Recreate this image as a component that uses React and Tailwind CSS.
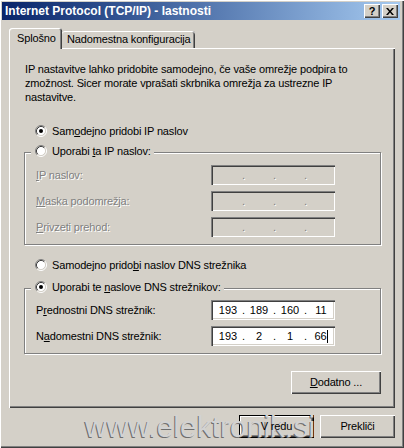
import React from "react";

const raised =
  "shadow-[inset_1px_1px_#ffffff,inset_-1px_-1px_#404040,inset_-2px_-2px_#808080]";
const sunken =
  "shadow-[inset_1px_1px_#808080,inset_2px_2px_#404040,inset_-1px_-1px_#ffffff,inset_-2px_-2px_#d4d0c8]";

function Radio({ checked }) {
  return (
    <svg width="12" height="12" viewBox="0 0 12 12" className="shrink-0 block">
      <circle cx="6" cy="6" r="4.5" fill="#ffffff" />
      <path d="M2.11 9.89 A5.5 5.5 0 0 1 9.89 2.11" fill="none" stroke="#808080" strokeWidth="1" />
      <path d="M9.89 2.11 A5.5 5.5 0 0 1 2.11 9.89" fill="none" stroke="#ffffff" strokeWidth="1" />
      <path d="M2.82 9.18 A4.5 4.5 0 0 1 9.18 2.82" fill="none" stroke="#404040" strokeWidth="1" />
      <path d="M9.18 2.82 A4.5 4.5 0 0 1 2.82 9.18" fill="none" stroke="#d4d0c8" strokeWidth="1" />
      {checked && <circle cx="6" cy="6" r="2" fill="#000000" />}
    </svg>
  );
}

function RadioRow({ checked, children }) {
  return (
    <div className="flex items-center h-[14px] gap-[5px]">
      <Radio checked={checked} />
      <span className="leading-[14px] whitespace-nowrap">{children}</span>
    </div>
  );
}

function IpField({ values, disabled, cursor }) {
  const seg = (v, i) => (
    <span key={"s" + i} className="w-[28px] text-center flex justify-center items-center">
      {v}
      {cursor && i === 3 && <span className="inline-block w-[1px] h-[13px] bg-black" />}
    </span>
  );
  const dot = (i) => (
    <span
      key={"d" + i}
      className={
        "w-[3px] text-center " +
        (disabled ? "text-[#808080] [text-shadow:1px_1px_0_#ffffff]" : "")
      }
    >
      .
    </span>
  );
  const parts = [];
  for (let i = 0; i < 4; i++) {
    parts.push(seg(values ? values[i] : "", i));
    if (i < 3) parts.push(dot(i));
  }
  return (
    <div
      className={
        "w-[124px] h-[20px] flex items-center pl-[3px] leading-[14px] tracking-normal " +
        sunken +
        (disabled ? " bg-[#d4d0c8]" : " bg-white")
      }
    >
      {parts}
    </div>
  );
}

function FieldRow({ label, disabled, values, cursor }) {
  return (
    <div className="flex items-center h-[20px]">
      <span
        className={
          "w-[175px] whitespace-nowrap " +
          (disabled ? "text-[#808080] [text-shadow:1px_1px_0_#ffffff]" : "")
        }
      >
        {label}
      </span>
      <IpField values={values} disabled={disabled} cursor={cursor} />
    </div>
  );
}

function GroupBox({ legend, checked, children, className }) {
  return (
    <div
      className={
        "relative w-[357px] border border-[#808080] shadow-[inset_1px_1px_#ffffff,1px_1px_#ffffff] pl-[11px] flex flex-col gap-[6px] " +
        className
      }
    >
      <div className="absolute -top-[9px] left-[6px] bg-[#d4d0c8] pl-[4px] pr-[3px]">
        <RadioRow checked={checked}>{legend}</RadioRow>
      </div>
      {children}
    </div>
  );
}

function Button({ children, className, isDefault }) {
  return (
    <div
      className={
        "h-[23px] flex items-center justify-center bg-[#d4d0c8] " +
        (isDefault ? "border border-black " : "") +
        raised +
        " " +
        className
      }
    >
      <span className="relative z-30">{children}</span>
    </div>
  );
}

export default function App() {
  return (
    <div className="w-[404px] h-[448px] bg-[#d4d0c8] relative overflow-hidden font-['Liberation_Sans',Arial,sans-serif] text-[11px] tracking-[-0.15px] text-black pt-[2px] pl-[2px] pr-[4px] shadow-[inset_1px_1px_#ffffff,inset_-1px_-1px_#404040,inset_-2px_-2px_#808080]">
      {/* Title bar */}
      <div className="h-[18px] flex items-center bg-gradient-to-r from-[#0a246a] to-[#a6caf0] pl-[3px] pr-[2px]">
        <span className="font-bold text-white whitespace-nowrap text-[12px] tracking-normal leading-[14px]">
          Internet Protocol (TCP/IP) - lastnosti
        </span>
        <div className="ml-auto flex gap-[2px]">
          <div className={"w-[16px] h-[14px] bg-[#d4d0c8] flex items-center justify-center font-bold text-[11px] tracking-normal leading-[11px] " + raised}>
            ?
          </div>
          <div className={"w-[16px] h-[14px] bg-[#d4d0c8] flex items-center justify-center " + raised}>
            <svg width="8" height="7" viewBox="0 0 8 7" className="block">
              <path d="M0 0 L2 0 L4 2.5 L6 0 L8 0 L5 3.5 L8 7 L6 7 L4 4.5 L2 7 L0 7 L3 3.5 Z" fill="#000" />
            </svg>
          </div>
        </div>
      </div>

      {/* Body */}
      <div className="pl-[7px] pr-[5px]">
        {/* Tabs */}
        <div className="mt-[8px] h-[20px] flex items-end">
          <div className="relative z-10 h-[21px] -mb-[1px] w-[53px] bg-[#d4d0c8] rounded-t-[3px] shadow-[inset_1px_1px_#ffffff,inset_-1px_0_#404040,inset_-2px_0_#808080] flex items-center pl-[8px] pb-[1px]">
            <span className="whitespace-nowrap">Splošno</span>
          </div>
          <div className="h-[17px] w-[133px] bg-[#d4d0c8] rounded-t-[3px] shadow-[inset_0_1px_#ffffff,inset_-1px_0_#404040,inset_-2px_0_#808080] flex items-center pl-[5px]">
            <span className="whitespace-nowrap">Nadomestna konfiguracija</span>
          </div>
        </div>

        {/* Panel */}
        <div className="w-[386px] h-[360px] flex flex-col pl-[15px] pr-[14px] pt-[14px] shadow-[inset_1px_1px_#ffffff,inset_-1px_-1px_#404040,inset_-2px_-2px_#808080]">
          <p className="leading-[14px] pl-[1px] whitespace-nowrap">
            IP nastavitve lahko pridobite samodejno, če vaše omrežje podpira to
            <br />
            zmožnost. Sicer morate vprašati skrbnika omrežja za ustrezne IP
            <br />
            nastavitve.
          </p>

          <div className="mt-[20px] ml-[11px]">
            <RadioRow checked>
              Sam<u>o</u>dejno pridobi IP naslov
            </RadioRow>
          </div>

          <GroupBox
            className="mt-[14px] pt-[12px] pb-[7px]"
            legend={
              <>
                Uporabi <u>t</u>a IP naslov:
              </>
            }
          >
            <FieldRow disabled label={<><u>I</u>P naslov:</>} />
            <FieldRow disabled label={<><u>M</u>aska podomrežja:</>} />
            <FieldRow disabled label={<><u>P</u>rivzeti prehod:</>} />
          </GroupBox>

          <div className="mt-[13px] ml-[11px]">
            <RadioRow>
              Samodejno prido<u>b</u>i naslov DNS strežnika
            </RadioRow>
          </div>

          <GroupBox
            className="mt-[16px] pt-[11px] pb-[7px]"
            checked
            legend={
              <>
                Uporabi te <u>n</u>aslove DNS strežnikov:
              </>
            }
          >
            <FieldRow
              label={<>P<u>r</u>ednostni DNS strežnik:</>}
              values={["193", "189", "160", "11"]}
            />
            <FieldRow
              label={<>N<u>a</u>domestni DNS strežnik:</>}
              values={["193", "2", "1", "66"]}
              cursor
            />
          </GroupBox>

          <div className="mt-[17px] self-end">
            <Button className="w-[90px]">
              <u>D</u>odatno ...
            </Button>
          </div>
        </div>

        {/* Bottom buttons */}
        <div className="mt-[7px] flex justify-end gap-[6px]">
          <Button isDefault className="w-[75px]">
            V redu
          </Button>
          <Button className="w-[75px]">Prekliči</Button>
        </div>
      </div>

      {/* Watermark */}
      <div className="absolute z-20 left-[85px] top-[412px] text-[30px] leading-[30px] tracking-normal text-[#d2d2d2] [text-shadow:-1px_1px_0_#6e6e6e] pointer-events-none whitespace-nowrap">
        www.elektronik.si
      </div>
    </div>
  );
}
